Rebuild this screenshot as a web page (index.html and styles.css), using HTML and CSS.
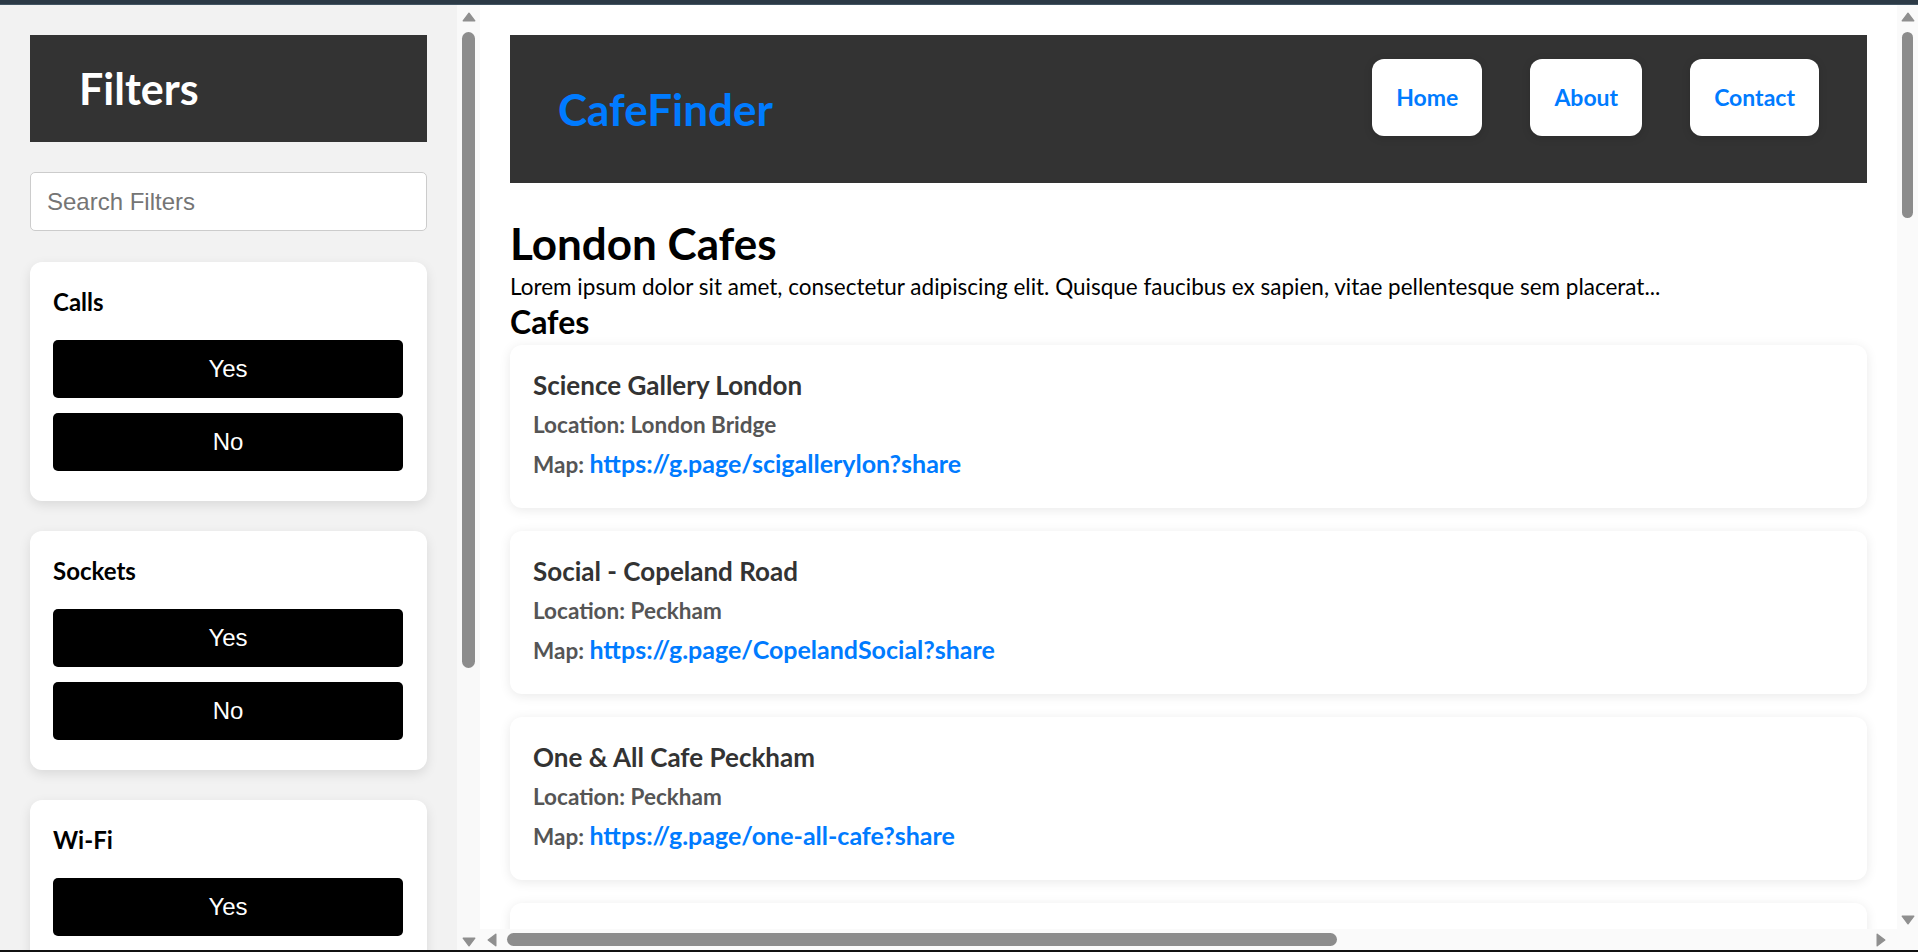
FILE: index.html
```html
<!DOCTYPE html>
<html lang="en">
<head>
<meta charset="utf-8">
<title>CafeFinder</title>
<link rel="stylesheet" href="styles.css">
</head>
<body>
<div class="topbar"></div>
<div class="app">
  <aside class="sidebar-pane">
    <div class="sidebar">
      <div class="filters-head"><h2>Filters</h2></div>
      <input class="search" type="text" placeholder="Search Filters">
      <section class="filter-card">
        <h3>Calls</h3>
        <button class="opt">Yes</button>
        <button class="opt">No</button>
      </section>
      <section class="filter-card">
        <h3>Sockets</h3>
        <button class="opt">Yes</button>
        <button class="opt">No</button>
      </section>
      <section class="filter-card">
        <h3>Wi-Fi</h3>
        <button class="opt">Yes</button>
        <button class="opt">No</button>
      </section>
    </div>
    <div class="vscroll vscroll-side">
      <svg class="arrow up" width="14" height="10" viewBox="0 0 14 10"><path d="M7 1.2 L12.8 8.8 L1.2 8.8 Z"/></svg>
      <div class="thumb"></div>
      <div class="spacer"></div>
      <svg class="arrow down" width="14" height="10" viewBox="0 0 14 10"><path d="M1.2 1.2 L12.8 1.2 L7 8.8 Z"/></svg>
    </div>
  </aside>
  <main class="main-pane">
    <div class="main-row">
      <div class="main-content">
        <header class="site-header">
          <div class="logo">CafeFinder</div>
          <nav class="nav">
            <a href="#">Home</a>
            <a href="#">About</a>
            <a href="#">Contact</a>
          </nav>
        </header>
        <h1 class="page-title">London Cafes</h1>
        <p class="intro">Lorem ipsum dolor sit amet, consectetur adipiscing elit. Quisque faucibus ex sapien, vitae pellentesque sem placerat...</p>
        <h2 class="section-title">Cafes</h2>
        <div class="cafes">
          <article class="cafe">
            <h3>Science Gallery London</h3>
            <p class="loc">Location: London Bridge</p>
            <p class="map">Map: <a href="#">https://g.page/scigallerylon?share</a></p>
          </article>
          <article class="cafe">
            <h3>Social - Copeland Road</h3>
            <p class="loc">Location: Peckham</p>
            <p class="map">Map: <a href="#">https://g.page/CopelandSocial?share</a></p>
          </article>
          <article class="cafe">
            <h3>One &amp; All Cafe Peckham</h3>
            <p class="loc">Location: Peckham</p>
            <p class="map">Map: <a href="#">https://g.page/one-all-cafe?share</a></p>
          </article>
          <article class="cafe">
            <h3>Brick Lane Coffee</h3>
            <p class="loc">Location: Shoreditch</p>
            <p class="map">Map: <a href="#">https://g.page/bricklanecoffee?share</a></p>
          </article>
        </div>
      </div>
      <div class="vscroll vscroll-main">
        <svg class="arrow up" width="14" height="10" viewBox="0 0 14 10"><path d="M7 1.2 L12.8 8.8 L1.2 8.8 Z"/></svg>
        <div class="thumb"></div>
        <div class="spacer"></div>
        <svg class="arrow down" width="14" height="10" viewBox="0 0 14 10"><path d="M1.2 1.2 L12.8 1.2 L7 8.8 Z"/></svg>
      </div>
    </div>
    <div class="hscroll">
      <svg class="arrow left" width="10" height="14" viewBox="0 0 10 14"><path d="M1.2 7 L8.8 1.2 L8.8 12.8 Z"/></svg>
      <div class="hthumb"></div>
      <div class="spacer"></div>
      <svg class="arrow right" width="10" height="14" viewBox="0 0 10 14"><path d="M1.2 1.2 L8.8 7 L1.2 12.8 Z"/></svg>
      <div class="corner"></div>
    </div>
  </main>
</div>
<div class="bottombar"></div>
</body>
</html>
```
FILE: styles.css
```css
* { box-sizing: border-box; }

html, body {
  margin: 0;
  height: 952px;
  overflow: hidden;
}

body {
  display: flex;
  flex-direction: column;
  font-family: Lato, "Open Sans", sans-serif;
  color: #000;
  background: #fff;
}

.topbar {
  height: 5px;
  flex: none;
  background: #2c3a46;
  border-bottom: 1px solid #435563;
}

.bottombar {
  height: 2px;
  flex: none;
  background: #111;
}

.app {
  display: flex;
  height: 945px;
  flex: none;
}

/* ---------- sidebar ---------- */
.sidebar-pane {
  display: flex;
  width: 480px;
  flex: none;
}

.sidebar {
  width: 457px;
  flex: none;
  background: #f2f2f2;
  padding: 30px;
  overflow: hidden;
}

.filters-head {
  background: #333;
  padding: 25px 48px 24px 49px;
}

.filters-head h2 {
  margin: 0;
  font: 700 43px/58px Lato, sans-serif;
  color: #fff;
}

.search {
  display: block;
  width: 100%;
  height: 59px;
  margin: 30px 0 31px;
  padding: 0 16px;
  border: 1px solid #ccc;
  border-radius: 5px;
  background: #fff;
  font: 24px "Liberation Sans", Arial, sans-serif;
  color: #000;
}

.search::placeholder { color: #757575; }

.filter-card {
  background: #fff;
  border-radius: 12px;
  padding: 24px 24px 30px 23px;
  margin-bottom: 30px;
  box-shadow: 0 4px 12px rgba(0, 0, 0, 0.1);
}

.filter-card h3 {
  margin: 0 0 22px;
  font: 700 24px/32px Lato, sans-serif;
  color: #000;
}

.opt {
  display: block;
  width: 100%;
  height: 58px;
  border: 0;
  border-radius: 5px;
  background: #000;
  color: #fff;
  font: 24px "Liberation Sans", Arial, sans-serif;
  padding: 0;
}

.opt + .opt { margin-top: 15px; }

/* ---------- scrollbars ---------- */
.vscroll {
  display: flex;
  flex-direction: column;
  align-items: center;
  flex: none;
}

.vscroll-side {
  width: 23px;
  background: #f9f9f9;
}

.vscroll-main {
  width: 21px;
  background: #fafafa;
}

.arrow path {
  fill: #8f8f8f;
  stroke: #8f8f8f;
  stroke-width: 1.4;
  stroke-linejoin: round;
}

.vscroll .arrow { flex: none; }
.vscroll .up { margin-top: 7px; }

.vscroll .thumb {
  flex: none;
  margin-top: 10px;
  background: #8c8c8c;
  border-radius: 7px;
}

.vscroll-side .thumb { width: 13px; height: 636px; }
.vscroll-side .down { margin-bottom: 3px; }

.vscroll-main .thumb { width: 11px; height: 186px; }
.vscroll-main .down { margin-bottom: 4px; }

.spacer { flex: 1; }

.hscroll {
  display: flex;
  align-items: center;
  height: 21px;
  flex: none;
  background: #fafafa;
  padding-left: 7px;
}

.hscroll .hthumb {
  width: 830px;
  height: 13px;
  margin-left: 10px;
  background: #8c8c8c;
  border-radius: 7px;
  flex: none;
}

.hscroll .right { margin-right: 11px; }

.hscroll .corner {
  width: 21px;
  height: 21px;
  flex: none;
}

/* ---------- main ---------- */
.main-pane {
  flex: 1;
  display: flex;
  flex-direction: column;
  min-width: 0;
}

.main-row {
  flex: 1;
  display: flex;
  min-height: 0;
}

.main-content {
  flex: 1;
  min-width: 0;
  padding: 30px 30px 0;
  overflow: hidden;
  background: #fff;
}

.site-header {
  display: flex;
  justify-content: space-between;
  height: 148px;
  padding: 0 48px;
  background: #333;
}

.logo {
  align-self: center;
  font: 700 44px/58px Lato, sans-serif;
  color: #007bff;
}

.nav {
  display: flex;
  gap: 48px;
  align-self: flex-start;
  margin-top: 24px;
}

.nav a {
  display: block;
  padding: 24px;
  background: #fff;
  border-radius: 12px;
  font: 700 23px/29px Lato, sans-serif;
  color: #007bff;
  text-decoration: none;
  box-shadow: 0 2px 8px rgba(0, 0, 0, 0.15);
}

.page-title {
  margin: 31px 0 0;
  font: 700 44px/58px Lato, sans-serif;
}

.intro {
  margin: 0;
  font: 400 22.5px/29px Lato, sans-serif;
}

.section-title {
  margin: 0;
  font: 700 32px/42px Lato, sans-serif;
}

.cafes {
  display: flex;
  flex-direction: column;
  gap: 23px;
  margin-top: 2px;
  padding-bottom: 40px;
}

.cafe {
  background: #fff;
  border-radius: 12px;
  padding: 24px 24px 28px 23px;
  box-shadow: 0 2px 12px rgba(0, 0, 0, 0.09);
}

.cafe h3 {
  margin: 0;
  font: 700 26px/32px Lato, sans-serif;
  color: #333;
}

.cafe .loc {
  margin: 10px 0 0;
  font: 700 22.5px/28px Lato, sans-serif;
  color: #555;
}

.cafe .map {
  margin: 9px 0 0;
  font: 700 22.5px/30px Lato, sans-serif;
  color: #555;
}

.cafe .map a {
  font-size: 25px;
  color: #007bff;
  text-decoration: none;
}
```
